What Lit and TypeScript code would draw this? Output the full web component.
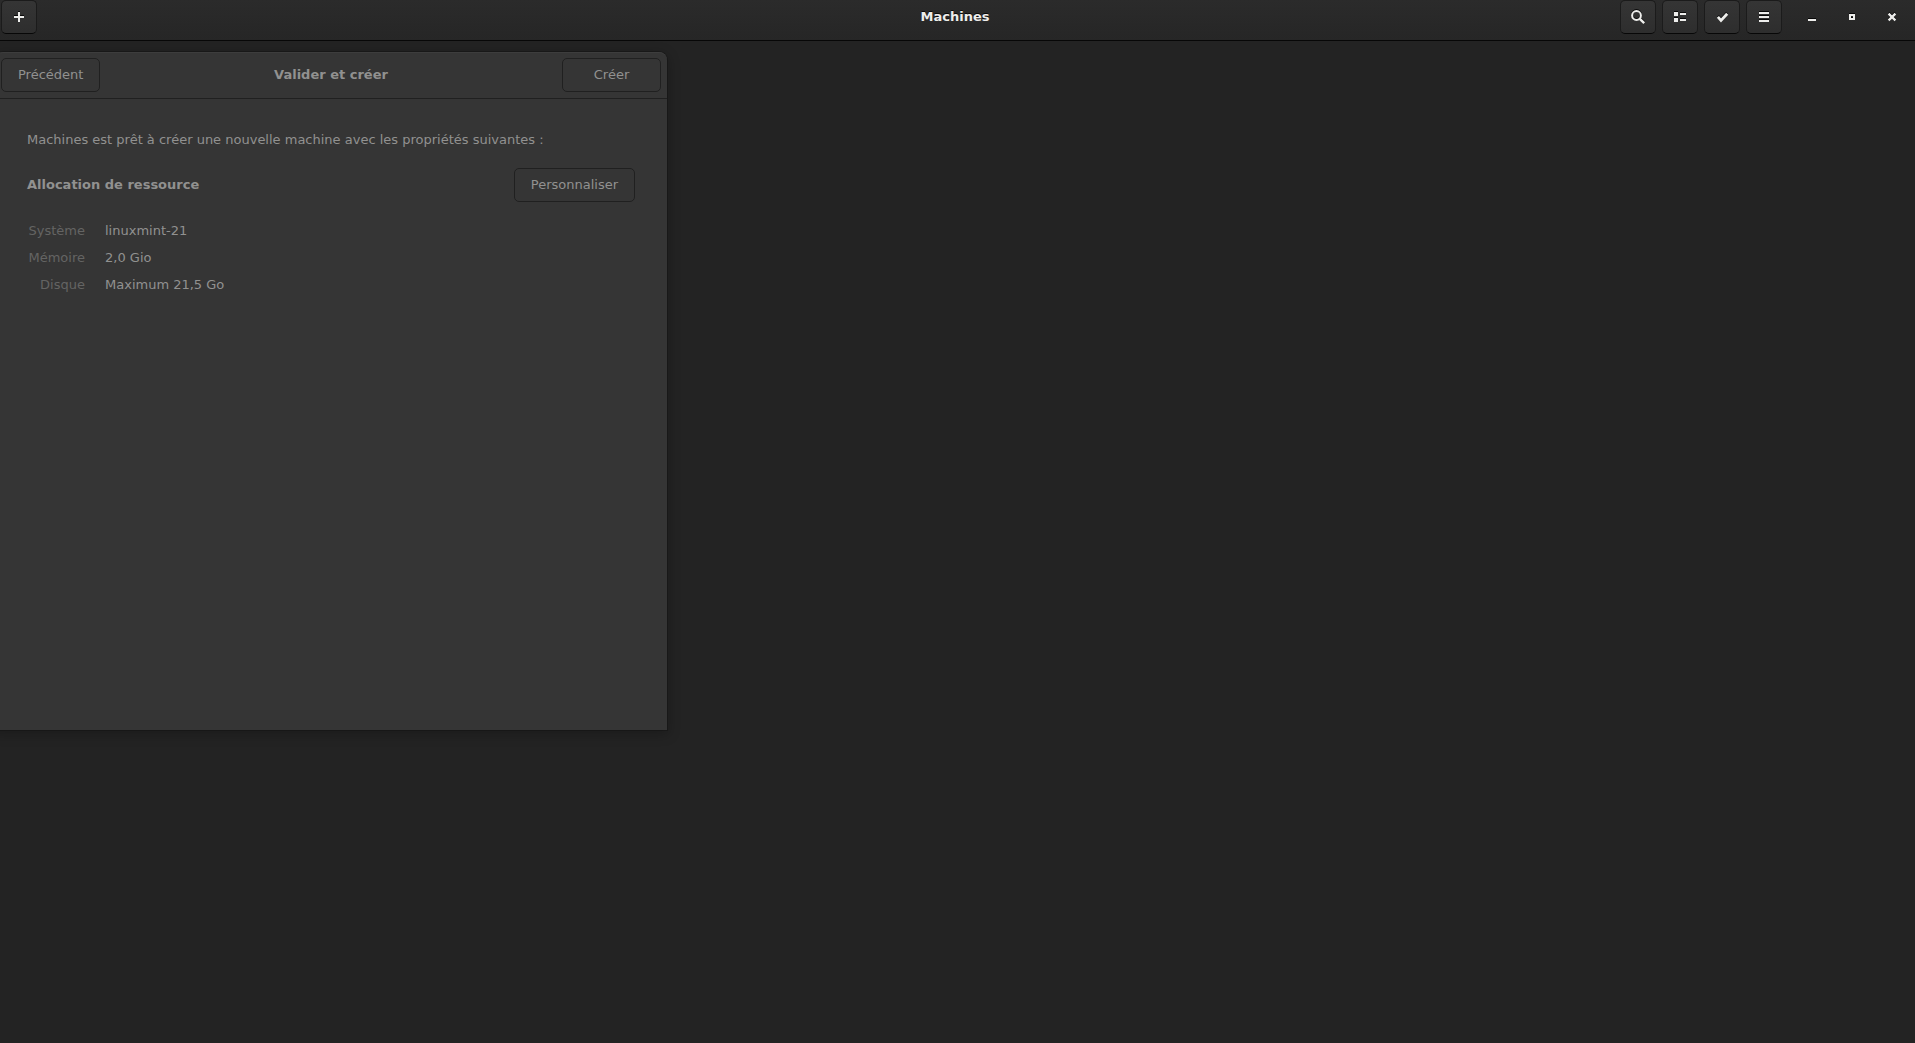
import { LitElement, html, svg, css, type SVGTemplateResult } from "lit";
import { customElement, property } from "lit/decorators.js";

const icons: Record<string, SVGTemplateResult> = {
  add: svg`<path d="M7 3h2v4h4v2H9v4H7V9H3V7h4z" fill="currentColor"/>`,
  search: svg`<circle cx="6.5" cy="6.5" r="4.4" fill="none" stroke="currentColor" stroke-width="2"/>
    <path d="M9.8 9.8l4.4 4.4" stroke="currentColor" stroke-width="2.4"/>`,
  list: svg`<path d="M2 3h4v4H2zM2 9h4v4H2zM8 4h6v2H8zM8 10h6v2H8z" fill="currentColor"/>`,
  check: svg`<path d="M3.9 7.9l3.1 3.5 6.2-6.6" fill="none" stroke="currentColor" stroke-width="2.8"/>`,
  menu: svg`<path d="M3 3h10v2H3zM3 7h10v2H3zM3 11h10v2H3z" fill="currentColor"/>`,
  minimize: svg`<path d="M4 10h8v2H4z" fill="currentColor"/>`,
  maximize: svg`<path d="M5 5h6v6H5zM7 7v2h2V7z" fill="currentColor" fill-rule="evenodd"/>`,
  close: svg`<path d="M4.6 4.6l6.8 6.8M11.4 4.6l-6.8 6.8" stroke="currentColor" stroke-width="2.2"/>`,
};

@customElement("icon-button")
class IconButton extends LitElement {
  @property() icon = "";
  @property() label = "";
  @property({ type: Boolean, reflect: true }) flat = false;

  static styles = css`
    :host { display: block; }
    button {
      display: flex;
      align-items: center;
      justify-content: center;
      box-sizing: border-box;
      width: 36px;
      height: 34px;
      margin: 0;
      padding: 0;
      color: #eeeeec;
      background: linear-gradient(to top, #2e2e2e 2px, #353535);
      border: 1px solid #1b1b1b;
      border-bottom-color: #070707;
      border-radius: 5px;
    }
    :host([flat]) button {
      width: 34px;
      background: none;
      border-color: transparent;
    }
    svg {
      display: block;
      width: 16px;
      height: 16px;
      filter: drop-shadow(0 -1px 0 rgba(0, 0, 0, 0.8));
    }
  `;

  render() {
    return html`<button type="button" aria-label=${this.label}>
      <svg viewBox="0 0 16 16" aria-hidden="true">${icons[this.icon]}</svg>
    </button>`;
  }
}

@customElement("creation-assistant")
class CreationAssistant extends LitElement {
  private properties = [
    ["Système", "linuxmint-21"],
    ["Mémoire", "2,0 Gio"],
    ["Disque", "Maximum 21,5 Go"],
  ];

  static styles = css`
    :host {
      display: flex;
      flex-direction: column;
      color: #919190;
      background: #353535;
      border-radius: 8px 8px 0 0;
      box-shadow: 0 0 0 1px rgba(0, 0, 0, 0.2), 0 3px 12px 2px rgba(0, 0, 0, 0.22);
    }
    .bar {
      display: grid;
      grid-template-columns: 1fr auto 1fr;
      align-items: center;
      padding: 5px 6px 6px;
      border-top: 1px solid #3d3d3d;
      border-bottom: 1px solid #202020;
      border-radius: 8px 8px 0 0;
    }
    h2, h3, p, dl, dd { margin: 0; font-size: inherit; }
    button {
      box-sizing: border-box;
      height: 34px;
      min-width: 99px;
      margin: 0;
      padding: 0 16px;
      font: inherit;
      color: inherit;
      background: transparent;
      border: 1px solid #202020;
      border-radius: 5px;
    }
    .back { justify-self: start; }
    .create { justify-self: end; }
    .body {
      display: flex;
      flex-direction: column;
      gap: 20px;
      padding: 33px 32px 32px;
    }
    .section {
      display: flex;
      align-items: center;
      justify-content: space-between;
    }
    .list {
      display: grid;
      grid-template-columns: 58px 1fr;
      gap: 9px 20px;
      line-height: 18px;
    }
    dt { text-align: right; color: #646463; }
  `;

  render() {
    return html`
      <header class="bar">
        <button type="button" class="back">Précédent</button>
        <h2>Valider et créer</h2>
        <button type="button" class="create">Créer</button>
      </header>
      <div class="body">
        <p>Machines est prêt à créer une nouvelle machine avec les propriétés suivantes :</p>
        <div class="section">
          <h3>Allocation de ressource</h3>
          <button type="button">Personnaliser</button>
        </div>
        <dl class="list">
          ${this.properties.map(([name, value]) => html`<dt>${name}</dt><dd>${value}</dd>`)}
        </dl>
      </div>
    `;
  }
}

@customElement("app-root")
class AppRoot extends LitElement {
  static styles = css`
    :host {
      display: flex;
      flex-direction: column;
      box-sizing: border-box;
      min-height: 100vh;
      overflow: hidden;
      background: #232323;
      color: #eeeeec;
      font: 13px/16px "DejaVu Sans", sans-serif;
    }
    .titlebar {
      display: grid;
      grid-template-columns: 1fr auto 1fr;
      align-items: center;
      margin-left: -5px;
      padding: 0 6px 6px;
      background: linear-gradient(to top, #262626, #2b2b2b);
      border-bottom: 1px solid #070707;
    }
    h1 {
      margin: 0;
      font-size: 13px;
      text-shadow: 0 -1px rgba(0, 0, 0, 0.8);
    }
    .tools { display: flex; gap: 6px; }
    .end { justify-content: flex-end; }
    .controls { display: flex; gap: 6px; margin-left: 7px; }
    .assistant {
      width: 35%;
      min-width: 672px;
      min-height: 678px;
      margin: 11px 0 0 -5px;
      align-self: flex-start;
      box-sizing: border-box;
    }
  `;

  render() {
    return html`
      <header class="titlebar">
        <div class="tools">
          <icon-button icon="add" label="Nouvelle machine"></icon-button>
        </div>
        <h1>Machines</h1>
        <div class="tools end">
          <icon-button icon="search" label="Rechercher"></icon-button>
          <icon-button icon="list" label="Vue en liste"></icon-button>
          <icon-button icon="check" label="Sélectionner"></icon-button>
          <icon-button icon="menu" label="Menu"></icon-button>
          <div class="controls">
            <icon-button flat icon="minimize" label="Réduire"></icon-button>
            <icon-button flat icon="maximize" label="Agrandir"></icon-button>
            <icon-button flat icon="close" label="Fermer"></icon-button>
          </div>
        </div>
      </header>
      <creation-assistant class="assistant" role="dialog" aria-label="Valider et créer"></creation-assistant>
    `;
  }
}
